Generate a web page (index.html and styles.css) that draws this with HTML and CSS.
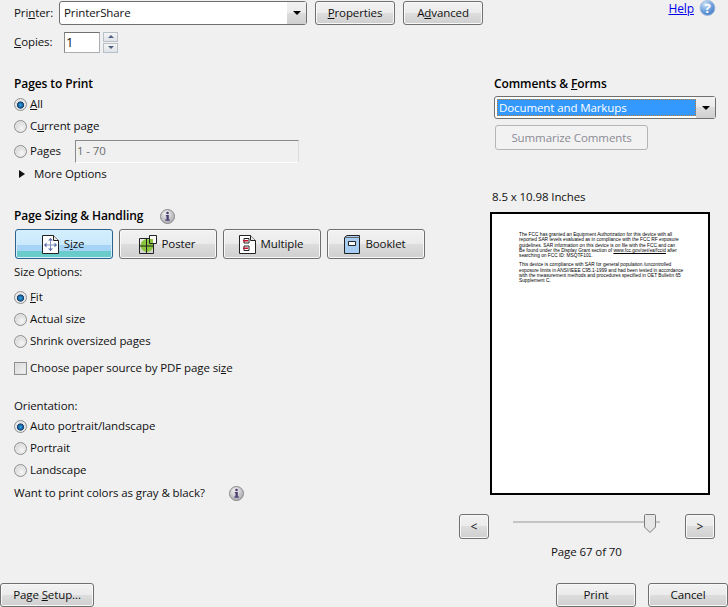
FILE: index.html
```html
<!DOCTYPE html>
<html lang="en">
<head>
<meta charset="utf-8">
<title>Print</title>
<link rel="stylesheet" href="styles.css">
</head>
<body>
<div class="dialog">
  <header class="top">
    <span class="top-label">Pri<u>n</u>ter:</span>
    <div class="combo printer">
      <span class="combo-value">PrinterShare</span>
      <span class="combo-arrow"><i class="arrow-down"></i></span>
    </div>
    <button class="btn wide"><span><u>P</u>roperties</span></button>
    <button class="btn wide"><span>A<u>d</u>vanced</span></button>
    <a class="help" href="#">Help</a>
    <svg class="help-icon" width="17" height="17" viewBox="0 0 17 17">
      <defs><radialGradient id="hg" cx="35%" cy="25%" r="85%"><stop offset="0" stop-color="#cfe3f8"/><stop offset="0.55" stop-color="#6d9fdc"/><stop offset="1" stop-color="#3f76c4"/></radialGradient></defs>
      <circle cx="8.5" cy="8" r="7.5" fill="url(#hg)" stroke="#a9c0dd"/>
      <text x="8.5" y="13" text-anchor="middle" class="help-mark">?</text>
    </svg>
  </header>
  <div class="main">
    <section class="left">
      <div class="row copies">
        <span class="copies-label"><u>C</u>opies:</span>
        <div class="field copies-field">1</div>
        <div class="spin">
          <span class="spin-btn"><i class="tri-up"></i></span>
          <span class="spin-btn"><i class="tri-down"></i></span>
        </div>
      </div>
      <h2 class="heading pages-heading">Pages to Print</h2>
      <div class="row opt"><span class="radio on"></span><span><u>A</u>ll</span></div>
      <div class="row opt"><span class="radio"></span><span>C<u>u</u>rrent page</span></div>
      <div class="row opt pages-row"><span class="radio"></span><span class="pages-label">Pa<u>g</u>es</span><div class="field pages-field">1 - 70</div></div>
      <div class="row more"><i class="tri-right"></i><span>More Options</span></div>

      <div class="row sizing-head">
        <h2 class="heading">Page Sizing &amp; Handling</h2>
        <svg class="info first-info" width="15" height="15" viewBox="0 0 15 15"><use href="#info"/></svg>
      </div>
      <div class="tabs">
        <button class="btn tab active">
          <svg width="17" height="19" viewBox="0 0 17 19"><path d="M.5.5H11.5L16.5 5.5V18.5H.5Z" fill="#fff" stroke="#222"/><path d="M11.5.5V5.5H16.5" fill="#e8e8e8" stroke="#222"/><path d="M8.5 3V16M2.5 10H14.5" stroke="#7f8fc0"/><path d="M6 5.5 8.5 3 11 5.5ZM6 13.5 8.5 16 11 13.5ZM4.5 7.5 2 10 4.500 12.500ZM12.500 7.500 15 10 12.500 12.500Z" fill="#5f6fa8"/></svg>
          <span>S<u>i</u>ze</span>
        </button>
        <button class="btn tab">
          <svg width="18" height="19" viewBox="0 0 18 19"><circle cx="8" cy="10.500" r="6.500" fill="#8cc63f"/><path d="M.5 3.500H14.500V18.500H.5ZM.5 11H14.500M7.500 3.500V18.500" fill="none" stroke="#222"/><path d="M10.500.5H17.500V8.500H10.500Z" fill="#f8f8f8" stroke="#222"/><path d="M11 4H14V8H11Z" fill="#8cc63f"/></svg>
          <span>Poster</span>
        </button>
        <button class="btn tab">
          <svg width="17" height="19" viewBox="0 0 17 19"><path d="M.5.5H11.500L16.500 5.500V18.500H.5Z" fill="#fff" stroke="#222"/><path d="M11.500.5V5.500H16.500" fill="#e8e8e8" stroke="#222"/><path d="M5 3.500H10V8H5ZM5 11H10V15.500H5Z" fill="#fff" stroke="#222"/><path d="M4 5H9V6.500H4ZM4 12.500H9V14H4Z" fill="#c8102e"/></svg>
          <span>Multiple</span>
        </button>
        <button class="btn tab">
          <svg width="16" height="19" viewBox="0 0 16 19"><path d="M.5 2.500 3 .5H15.500V18.500H.5Z" fill="#a8cdf2" stroke="#222"/><path d="M.5 2.500H15.500" stroke="#666"/><path d="M4.500 6.500H11.500V10.500H4.500Z" fill="#fff" stroke="#222"/></svg>
          <span>Booklet</span>
        </button>
      </div>
      <div class="row plain size-options">Size Options:</div>
      <div class="row opt fit"><span class="radio on"></span><span><u>F</u>it</span></div>
      <div class="row opt"><span class="radio"></span><span>Actual size</span></div>
      <div class="row opt"><span class="radio"></span><span>Shrink oversized pages</span></div>
      <div class="row opt choose"><span class="check"></span><span>Choose paper source by PDF page si<u>z</u>e</span></div>
      <div class="row plain orientation">Orientation:</div>
      <div class="row opt"><span class="radio on"></span><span>Auto po<u>r</u>trait/landscape</span></div>
      <div class="row opt"><span class="radio"></span><span>Portrait</span></div>
      <div class="row opt"><span class="radio"></span><span>Landscape</span></div>
      <div class="row plain gray">
        <span>Want to print colors as gray &amp; black?</span>
        <svg class="info second-info" width="15" height="15" viewBox="0 0 15 15">
          <defs>
            <radialGradient id="ig" cx="40%" cy="30%" r="80%"><stop offset="0" stop-color="#f2f2f2"/><stop offset="1" stop-color="#a3a3a8"/></radialGradient>
            <g id="info"><circle cx="7.500" cy="7.500" r="7" fill="url(#ig)" stroke="#8a8a8f"/><circle cx="7.500" cy="4" r="1.300" fill="#4e3f73"/><path d="M5.800 6H8.800V10.500H9.800V11.800H5.300V10.500H6.500V7.300H5.800Z" fill="#4e3f73"/></g>
          </defs>
          <use href="#info"/>
        </svg>
      </div>
    </section>
    <aside class="right">
      <h2 class="heading comments-heading">Comments &amp; <u>F</u>orms</h2>
      <div class="combo comments">
        <span class="combo-value selected">Document and Markups</span>
        <span class="combo-arrow"><i class="arrow-down"></i></span>
      </div>
      <button class="btn summarize" disabled>Summarize Comments</button>
      <div class="dims">8.5 x 10.98 Inches</div>
      <div class="preview">
        <p>The FCC has granted an Equipment Authorization for this device with all<br>reported SAR levels evaluated as in compliance with the FCC RF exposure<br>guidelines. SAR information on this device is on file with the FCC and can<br>Be found under the Display Grant section of <u>www.fcc.gov/oet/ea/fccid</u> after<br>searching on FCC ID: MSQTF101.</p>
        <p>This device is compliance with SAR for general population /uncontrolled<br>exposure limits in ANSI/IEEE C95.1-1999 and had been tested in accordance<br>with the measurement methods and procedures specified in OET Bulletin 65<br>Supplement C.</p>
      </div>
      <div class="pager">
        <button class="btn nav">&lt;</button>
        <div class="slider"><span class="track"></span>
          <svg class="thumb" width="12" height="19" viewBox="0 0 12 19"><path d="M1.500.5H10.500Q11.500.5 11.500 1.500V13L6 18.500.5 13V1.500Q.5.5 1.500.5Z" fill="#e6e6e6" stroke="#7c7c7c"/></svg>
        </div>
        <button class="btn nav">&gt;</button>
      </div>
      <div class="page-label">Page 67 of 70</div>
    </aside>
  </div>
  <footer class="bottom">
    <button class="btn setup"><span>Page <u>S</u>etup...</span></button>
    <div class="bottom-actions">
      <button class="btn wide">Print</button>
      <button class="btn wide">Cancel</button>
    </div>
  </footer>
</div>
</body>
</html>
```
FILE: styles.css
```css
* { box-sizing: border-box; }
html, body { margin: 0; padding: 0; }
body { width: 728px; height: 607px; overflow: hidden; background: #f0f0f0; }
.dialog {
  width: 728px; height: 607px; display: flex; flex-direction: column;
  font: 11.500px/16px "Open Sans", "Noto Sans", sans-serif; color: #111; letter-spacing: -0.1px;
}
.heading { margin: 0; font-size: 12px; font-weight: 600; line-height: 20px; color: #000; letter-spacing: -0.1px; }
u { text-underline-offset: 1px; }

.top { display: flex; align-items: flex-start; height: 26px; padding: 1px 0 0 14px; }
.top-label { width: 45px; line-height: 24px; }
.btn {
  font: inherit; color: #111; letter-spacing: inherit; padding: 0; margin: 0;
  border: 1px solid #707070; border-radius: 3px; box-shadow: inset 0 0 0 1px #f8f8f8;
  background: linear-gradient(#f2f2f2 0, #ebebeb 50%, #dddddd 50%, #cfcfcf 100%);
  display: flex; align-items: center; justify-content: center;
}
.wide { width: 80px; height: 24px; }
.top .wide { margin-left: 8px; }
.help { margin-left: auto; color: #0000ee; font-size: 12px; line-height: 16px; }
.help-icon { margin: -1px 12px 0 5px; }
.help-mark { font: bold 13px "Open Sans", sans-serif; fill: #fff; }

.combo { display: flex; border: 1px solid #707070; border-radius: 3px; background: #fff; height: 24px; }
.printer { width: 248px; }
.combo-value { flex: 1; padding-left: 4px; line-height: 22px; }
.combo-arrow {
  width: 19px; display: flex; align-items: center; justify-content: center;
  background: linear-gradient(#f2f2f2, #ebebeb 50%, #ddd 50%, #cfcfcf);
}
.arrow-down { width: 0; height: 0; border: 4px solid transparent; border-top: 4px solid #000; border-bottom: 0; }

.main { display: flex; flex: 1; min-height: 0; }
.left { width: 459px; padding-left: 14px; }
.row { display: flex; align-items: center; }

.copies { height: 22px; margin-top: 5px; }
.copies-label { width: 50px; }
.field { border: 1px solid #abadb3; border-top-color: #707070; border-left-color: #8a8a8a; line-height: 18px; padding-left: 1px; background: #fff; }
.copies-field { width: 36px; height: 21px; font-size: 13px; }
.spin { width: 15px; margin-left: 3px; display: flex; flex-direction: column; gap: 1px; }
.spin-btn {
  height: 10px; border: 1px solid #b8c0c8; background: linear-gradient(#f5f5f5, #dfe3e8);
  display: flex; align-items: center; justify-content: center;
}
.tri-up { width: 0; height: 0; border: 3px solid transparent; border-bottom: 3px solid #4d6185; border-top: 0; }
.tri-down { width: 0; height: 0; border: 3px solid transparent; border-top: 3px solid #4d6185; border-bottom: 0; }

.pages-heading { margin-top: 21px; margin-bottom: -1px; }
.opt { height: 22px; gap: 3px; }
.radio {
  width: 13px; height: 13px; border-radius: 50%; border: 1px solid #8e8f8f; flex: none; position: relative;
  background: radial-gradient(circle at 60% 65%, #f6f6f6 0, #dcdcdc 60%, #c8c8c8 100%);
  box-shadow: inset 0 0 0 1px #e8e8e8;
}
.radio.on { background: radial-gradient(circle at 50% 55%, #2fa8e0 0, #17609e 30%, #173a66 40%, #e3e3e3 48%, #eee 100%); }
.pages-row { height: 28px; }
.pages-label { width: 42px; }
.pages-field { width: 224px; height: 23px; background: #f0f0f0; color: #6d6d6d; border-color: #8a8a8a #dcdcdc #fff #8a8a8a; line-height: 19px; }
.more { height: 18px; padding-left: 5px; gap: 9px; }
.tri-right { width: 0; height: 0; border: 4px solid transparent; border-left: 6px solid #111; border-right: 0; }

.sizing-head { height: 20px; margin-top: 23px; }
.first-info { margin-left: 17px; }
.tabs { display: flex; gap: 6px; margin: 3px 0 0 1px; }
.tab { width: 98px; height: 30px; gap: 5px; }
.tab svg { flex: none; margin-left: -2px; }
.tab.active {
  border-color: #2c628b; box-shadow: inset 0 0 0 1px #d5eefc;
  background: linear-gradient(#d4effe 0, #c9e9fb 54%, #a6d4f6 54%, #a6d4f6 75%, #6accca 75%, #6accca 100%);
}
.plain { height: 18px; }
.size-options { margin-top: 4px; }
.fit { margin-top: 5px; }
.check { width: 13px; height: 13px; border: 1px solid #8e8f8f; background: linear-gradient(135deg, #d8d8d8, #f4f4f4); box-shadow: inset 0 0 0 1px #e2e2e2; flex: none; }
.choose { margin-top: 5px; }
.orientation { margin-top: 18px; }
.gray { margin-top: 3px; }
.second-info { margin-left: 24px; }

.right { width: 269px; }
.comments-heading { margin: 48px 0 0 35px; }
.comments { width: 222px; height: 23px; margin: 2px 0 0 35px; padding: 2px 0 2px 2px; border-radius: 3px; }
.selected { background: #3399ff; color: #fff; line-height: 17px; padding-left: 2px; outline: 1px dotted #c77a2d; outline-offset: -1px; }
.comments .combo-arrow { margin: -2px 0; }
.summarize {
  width: 153px; height: 25px; margin: 6px 0 0 36px; color: #8b8b95; background: #f2f2f2;
  border-color: #b5b5b5; box-shadow: none;
}
.dims { margin: 38px 0 0 33px; line-height: 18px; }
.preview {
  width: 220px; height: 283px; margin: 6px 0 0 31px; background: #fff; border: 2px solid #000;
  padding: 18px 26px 0 27px; font-size: 4.800px; line-height: 5.300px; letter-spacing: 0; font-family: "Liberation Sans", sans-serif; color: #000;
  white-space: nowrap;
}
.preview p { margin: 0 0 4px; }
.preview u { text-decoration-thickness: 0.5px; }
.pager { display: flex; margin-top: 19px; height: 25px; align-items: stretch; }
.nav { width: 30px; font-size: 12px; }
.slider { position: relative; width: 147px; margin: 0 25px 0 24px; }
.track { display: block; height: 3px; margin-top: 7px; background: #c4c4c4; border-bottom: 1px solid #eee; }
.thumb { position: absolute; left: 131px; top: 0; }
.page-label { margin: 4px 0 0 92px; line-height: 18px; }

.bottom { display: flex; justify-content: space-between; height: 24px; flex: none; }
.setup { width: 94px; height: 24px; }
.bottom-actions { display: flex; gap: 12px; }
```
